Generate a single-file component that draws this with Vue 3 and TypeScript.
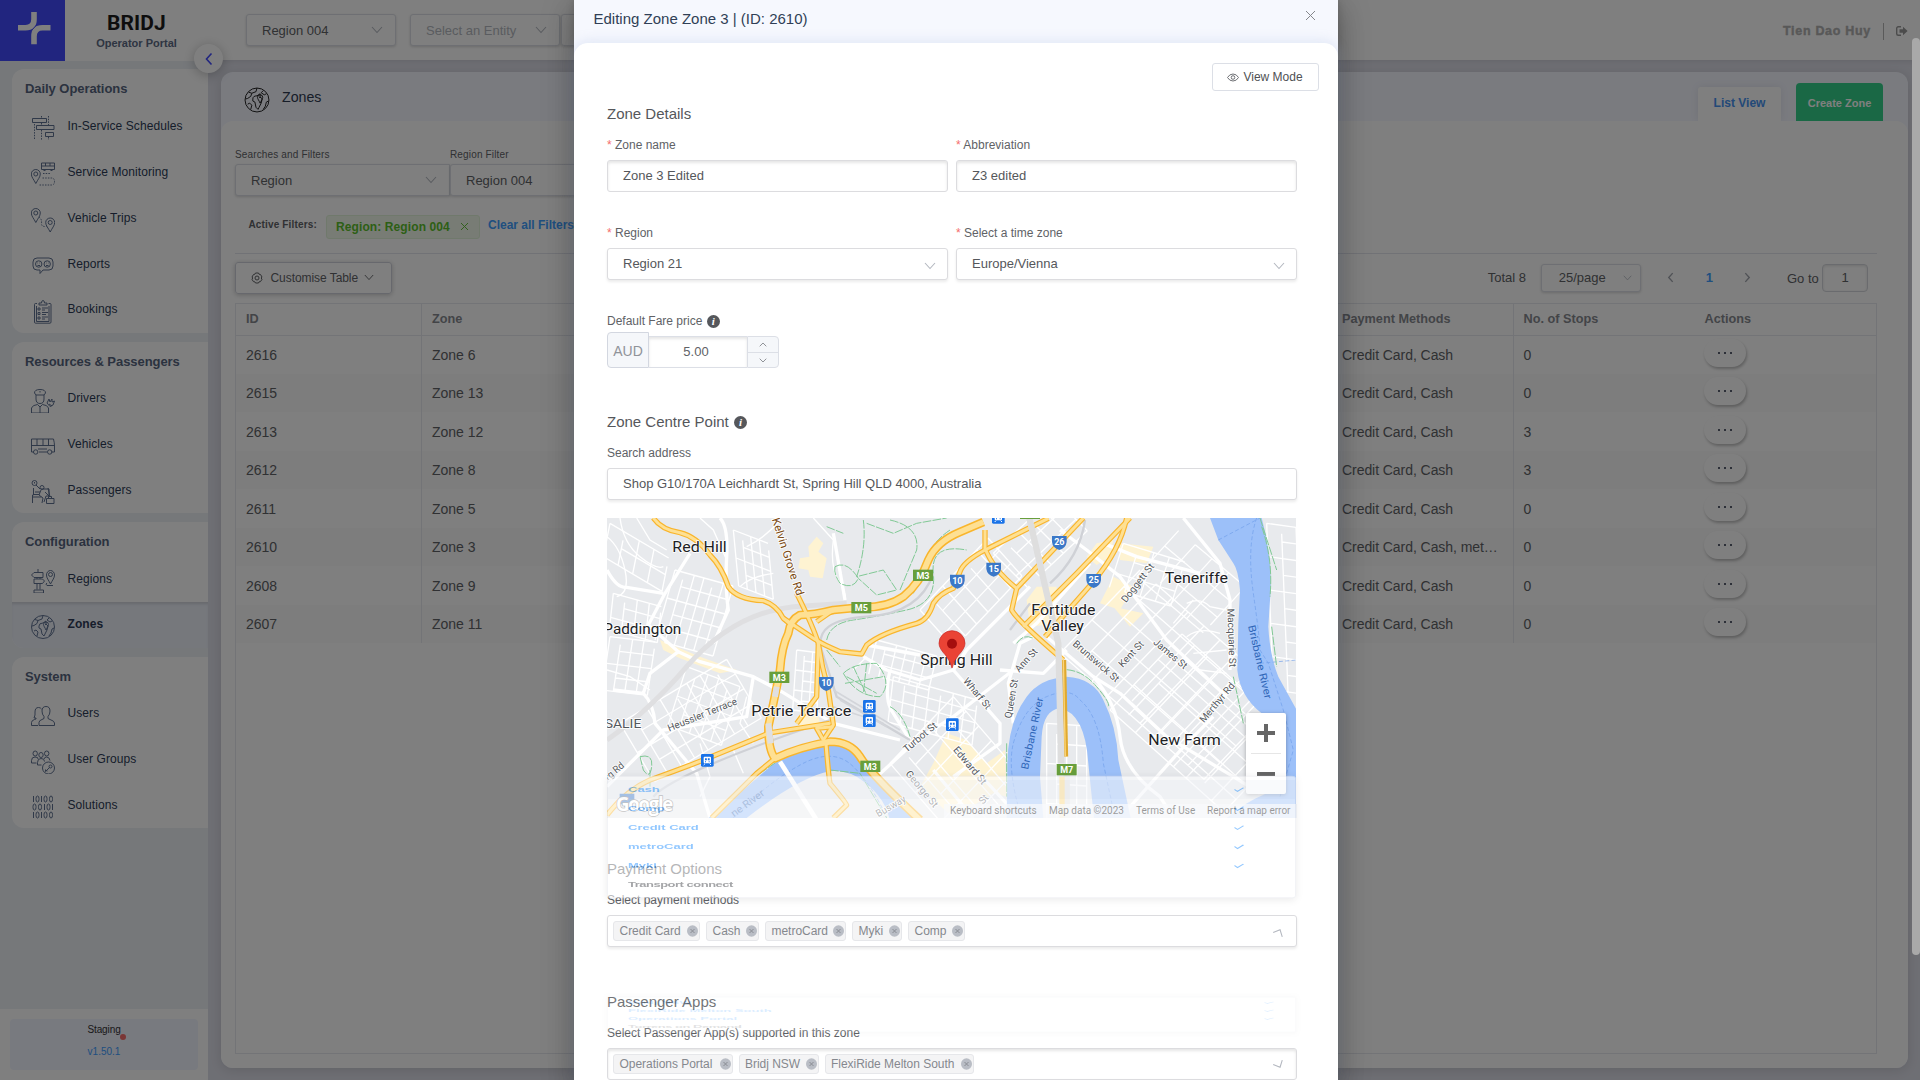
<script setup lang="ts">
interface NavItem { label: string; icon: string; active?: boolean }
interface NavGroup { title: string; items: NavItem[] }
interface Label { t: string; x: number; y: number; s: number; w: number; r?: number; c?: string; k?: number }

const groups: NavGroup[] = [
  { title: 'Daily Operations', items: [
    { label: 'In-Service Schedules', icon: 'schedule' },
    { label: 'Service Monitoring', icon: 'monitor' },
    { label: 'Vehicle Trips', icon: 'trips' },
    { label: 'Reports', icon: 'reports' },
    { label: 'Bookings', icon: 'bookings' },
  ] },
  { title: 'Resources & Passengers', items: [
    { label: 'Drivers', icon: 'drivers' },
    { label: 'Vehicles', icon: 'vehicles' },
    { label: 'Passengers', icon: 'passengers' },
  ] },
  { title: 'Configuration', items: [
    { label: 'Regions', icon: 'regions' },
    { label: 'Zones', icon: 'zones', active: true },
  ] },
  { title: 'System', items: [
    { label: 'Users', icon: 'users' },
    { label: 'User Groups', icon: 'groups' },
    { label: 'Solutions', icon: 'solutions' },
  ] },
]

const PIN = (x: number, y: number) =>
  `M${x} ${y + 14}C${x - 2} ${y + 10} ${x - 4.5} ${y + 7.5} ${x - 4.5} ${y + 4.5}A4.5 4.5 0 0 1 ${x + 4.5} ${y + 4.5}C${x + 4.5} ${y + 7.5} ${x + 2} ${y + 10} ${x} ${y + 14}ZM${x - 2} ${y + 4.5}a2 2 0 1 0 4 0a2 2 0 1 0-4 0`

const icons: Record<string, string[]> = {
  schedule: ['M1.5 2.5h14v4h-14zM5.500 9.500h17.500v4h-17.500zM14.500 16.500h8v4h-8z', '-M3.500 8v16M10.500 0v2M10.500 14v10M17.500 0v9M17.500 21v3M10.500 7v2'],
  monitor: [PIN(4.800, 7.500), 'M10.500 1h13v6.500h-13zM10.500 4h13M14.500 1v3M19 1v3M12.500 8.500h2M19.500 8.500h2', '-M12 11.500h7M11.500 16h9q3 0 3 3.500t-3 3.500h-13'],
  trips: [PIN(4.800, 0.500), PIN(19.200, 10), '-M8 9q3 2 2.500 6t5 3.500'],
  reports: ['M6 4h12a4 4 0 0 1 4 4v4a4 4 0 0 1-4 4h-6l-3 3.500v-3.500h-3a4 4 0 0 1-4-4v-4a4 4 0 0 1 4-4z', 'M4.500 10a3.200 3.200 0 1 0 6.400 0a3.200 3.200 0 1 0-6.400 0M13 10a3.200 3.200 0 1 0 6.400 0a3.200 3.200 0 1 0-6.400 0M6.500 11.500h2.500M15 11.500h2.500M6.500 9h.5M8.500 9h.5M15 9h.5M17 9h.5'],
  bookings: ['M6 3.500h-1.500q-1 0-1 1v17.500q0 1.200 1 1.200h14.500q1 0 1-1.200v-17.500q0-1-1-1h-1.500M5.500 6v15.500h12.500v-15.500M8 5v-2h2.500q0-2.500 1.500-2.500t1.500 2.500h2.500v2z', 'M7 8h2v2h-2zM7 12.500h2v2h-2zM7 17h2v2h-2zM11 8h6M11 10h3M11 12.500h6M11 14.500h4M11 17h6M11 19h3'],
  drivers: ['M3.500 4q0-3.500 5.500-3.500t5.500 3.500l-1.500 2h-8zM5 6v4q0 4.500 4 4.500t4-4.500v-4M9 2v1.500', 'M.5 24v-5q1-3 6-3.500l2.500 2.500 2.500-2.500q5 .5 6 3.500v5zM9 18v6', 'M16 14l2-4 1 3 2-3v3l2.500-1-1.500 4-3 1.500zM18 15l3 2'],
  vehicles: ['M.5 4h22q1 4 1 7v6h-3M3 17h-2.500v-13M.5 10.500h23M6 4v6.500M12 4v6.500M17.500 4v6.500M8 17h8M7 14h9M2.500 17a2.200 2.200 0 1 0 4.400 0a2.200 2.200 0 1 0-4.400 0M16.500 17a2.200 2.200 0 1 0 4.400 0a2.200 2.200 0 1 0-4.400 0'],
  passengers: ['M1 3a2.500 2.500 0 1 0 5 0a2.500 2.500 0 1 0-5 0M3.500 2v1.500M5 5l4 4M2.500 8v7h-1v8M1.500 17h9M9 7.500a2 2 0 1 0 4 0a2 2 0 1 0-4 0M10 9h8v7h-3l-2 6M10 10l-2 5 4 3-1 5M14 12l5 5M15.500 18.500h7.500v5h-7.500zM17.500 18v-1.500h3v1.500M4 12h5M3 14.500h5M17 8l2 9'],
  regions: ['M7 0v3M.500 6l2.500-2.500h9v5h-9zM3 10h8.500l2 2-2 2.500h-8.500zM6 8.500v1.500M9 8.500v1.500M6 14.500v6M9 14.500v6M3 21h9.500v3h-9.500z', 'M19.500 15c-2-4-4-6-4-9a4 4.500 0 0 1 8 0c0 3-2 5-4 9zM17.500 5.500a2 2 0 1 0 4 0a2 2 0 1 0-4 0M16 14q-2 1 0 2.500h6'],
  zones: ['M.5 12a11.500 11.500 0 1 0 23 0a11.500 11.500 0 1 0-23 0', 'M4 4.500l3 1-1 3-3 2-2 .5M7 5.500l4-1.500 1-3.500M3 16l2-1 2 2-1 4M18 3l-2 2 3 2 2-1M23 13l-2 1-1 4-2 3', 'M8 11q0-3 4-3l3-2v3l2 2-1 4-2 4-1 2-2-2-1-5-2-1z', 'M15 15c-1-2.500-2.500-4-2.500-5.500a2.500 2.500 0 0 1 5 0c0 1.500-1.500 3-2.500 5.500zM14 9.500h2'],
  users: ['M8 21.500v-3q0-2 3-3l2-1v-2q-2-2-2-5.500 0-4.500 4-4.500t4 4.500q0 3.500-2 5.500v2l2 1q4.500 1.500 4.500 3.500v2.500z', 'M7 21.500h-6.500v-3q0-2 3-3l1.500-.5v-1h-2q1.500-3 1-6 0-4.500 3.500-4.500 2 0 3 1.500'],
  groups: ['M2 3.500a2.200 2.500 0 1 0 4.400 0a2.200 2.500 0 1 0-4.400 0M13.500 3.500a2.200 2.500 0 1 0 4.400 0a2.200 2.500 0 1 0-4.400 0M7.800 5a2.200 2.500 0 1 0 4.400 0a2.200 2.500 0 1 0-4.400 0', 'M.5 13v-2.500q0-3.500 3.500-3.500t3 2M5.500 13h-5M6.500 15v-2.500q0-4 3.500-4t3.500 3M6.500 15h4M13 9q.5-2 2.500-2 3 0 3.500 3.500', 'M11.500 18a6 6 0 1 0 12 0a6 6 0 1 0-12 0M14.500 21.500l4-4M18 16.500a1.500 1.500 0 1 0 3 0a1.500 1.500 0 1 0-3 0M14.500 21.500v-2M16 21.500v-1'],
  solutions: ['M2.500 1v6M10.500 1v6M2.500 17v6M10.500 17v6M13.500 9v6M21.500 9v6', 'M5 3.500q0-2.500 1.500-2.500t1.500 2.500v1q0 2.500-1.500 2.500t-1.500-2.500zM13 3.500q0-2.500 1.500-2.500t1.500 2.500v1q0 2.500-1.500 2.500t-1.500-2.500zM18.500 3.500q0-2.500 1.500-2.500t1.500 2.500v1q0 2.500-1.500 2.500t-1.500-2.500z', 'M2 11.500q0-2.500 1.500-2.500t1.500 2.500v1q0 2.500-1.500 2.500t-1.500-2.500zM7.500 11.500q0-2.500 1.500-2.500t1.500 2.500v1q0 2.500-1.500 2.500t-1.500-2.500zM16 11.500q0-2.500 1.500-2.500t1.500 2.500v1q0 2.500-1.500 2.500t-1.500-2.500z', 'M5 19.500q0-2.500 1.500-2.500t1.500 2.500v1q0 2.500-1.500 2.500t-1.500-2.500zM13 19.500q0-2.500 1.500-2.500t1.500 2.500v1q0 2.500-1.500 2.500t-1.500-2.500zM18.500 19.500q0-2.500 1.500-2.500t1.500 2.500v1q0 2.500-1.500 2.500t-1.500-2.500z'],
}

const rows = [
  { id: 2616, zone: 'Zone 6', pay: 'Credit Card, Cash', stops: 0 },
  { id: 2615, zone: 'Zone 13', pay: 'Credit Card, Cash', stops: 0 },
  { id: 2613, zone: 'Zone 12', pay: 'Credit Card, Cash', stops: 3 },
  { id: 2612, zone: 'Zone 8', pay: 'Credit Card, Cash', stops: 3 },
  { id: 2611, zone: 'Zone 5', pay: 'Credit Card, Cash', stops: 0 },
  { id: 2610, zone: 'Zone 3', pay: 'Credit Card, Cash, met…', stops: 0 },
  { id: 2608, zone: 'Zone 9', pay: 'Credit Card, Cash', stops: 0 },
  { id: 2607, zone: 'Zone 11', pay: 'Credit Card, Cash', stops: 0 },
]

const payTags: [string, number][] = [['Credit Card', 87], ['Cash', 53], ['metroCard', 81], ['Myki', 50], ['Comp', 57]]
const appTags: [string, number][] = [['Operations Portal', 119.5], ['Bridj NSW', 80], ['FlexiRide Melton South', 149]]
const payOptions = ['Cash', 'Comp', 'Credit Card', 'metroCard', 'Myki', 'Transport connect']
const appOptions = ['Bridj NSW', 'FlexiRide Melton South', 'Operations Portal', 'Torrens on Demand']

/* Minor street lattice: nu+1 lines along v and nv+1 lines along u */
function lattice(x: number, y: number, u: [number, number], v: [number, number], nu: number, nv: number): string {
  let d = ''
  for (let i = 0; i <= nu; i++) {
    const a = i % 3 === 1 ? 0.5 : 0
    d += `M${x + u[0] * i + v[0] * a} ${y + u[1] * i + v[1] * a}l${v[0] * (nv - a)} ${v[1] * (nv - a)}`
  }
  for (let j = 0; j <= nv; j++) {
    const a = j % 2
    d += `M${x + v[0] * j + u[0] * a} ${y + v[1] * j + u[1] * a}l${u[0] * (nu - a)} ${u[1] * (nu - a)}`
  }
  return d
}

const minor = [
  lattice(225, 180, [29, 8], [-12, 42], 6, 5),
  lattice(30, 380, [34, 4], [-6, 40], 4, 4),
  lattice(260, 470, [32, 12], [-14, 44], 5, 4),
  lattice(60, 640, [40, -24], [26, 44], 8, 4),
  lattice(400, 60, [26, 10], [4, 42], 4, 4),
  lattice(590, 420, [24, 3], [-2, 30], 3, 6),
  lattice(30, 40, [44, 26], [-10, 50], 4, 2),
  lattice(40, 250, [36, 10], [-4, 36], 4, 3),
  lattice(830, 390, [30, 8], [-8, 34], 6, 3),
  lattice(960, 300, [34, -36], [34, 38], 6, 3),
  lattice(880, 500, [36, 10], [-4, 34], 7, 4),
  lattice(870, 760, [38, -40], [38, 44], 5, 6),
  lattice(1180, 130, [36, -34], [34, 34], 5, 3),
  lattice(1380, 430, [48, 42], [48, -50], 9, 5),
  lattice(1530, 600, [38, 34], [36, -38], 9, 6),
  lattice(1570, 100, [46, 14], [-14, 44], 4, 3),
  lattice(1610, 200, [50, 42], [42, -46], 4, 3),
  lattice(2000, 40, [44, 6], [2, 50], 3, 10),
  lattice(1340, 640, [30, 2], [0, 60], 4, 5),
  'M60 24Q70 100 120 140T190 170M110 24L150 90 200 120M21 80Q60 110 75 180T50 260M300 24L340 60 380 150M420 230Q450 200 520 190M700 90Q690 170 715 210T735 270M640 24L700 90M540 30Q500 80 440 110M21 480L90 500 150 540M300 700L330 800 300 860M400 720L430 790M440 560L420 640 460 700M760 480L800 440M1760 280Q1800 260 1830 290L1880 300M1760 380Q1800 350 1860 370M1780 430L1880 420M1800 480L1880 490M1720 340L1780 270',
]
const major = [
  'M270 130L195 250 145 345 235 425 150 490 130 550 40 540',
  'M21 180Q50 235 80 232L190 250',
  'M360 24Q385 50 380 140T385 300L340 400',
  'M235 425L300 455 460 500 545 545 700 640 900 690',
  'M130 550Q160 580 165 640L290 790 330 924',
  'M460 500L440 620 190 660 60 790 21 830',
  'M790 440L860 480 960 510 1060 480 1100 420 1290 230',
  'M800 405L960 435',
  'M870 480Q850 570 880 610L930 690',
  'M700 70L735 270',
  'M1060 480L1200 640 1200 700 1060 800',
  'M1000 780L1120 924M1090 740L1260 924',
  'M820 810L950 690 1060 620 1240 480',
  'M1240 640L1225 520 1260 400 1300 380',
  'M1200 480L1330 490 1400 420',
  'M1340 380L1480 500 1560 550 1700 680 1900 800 1980 850',
  'M1380 60L1460 120 1560 200 1700 390 1880 560',
  'M1750 24L1860 160 1890 270 1890 480',
  'M1840 620L1760 700 1560 924',
  'M1510 100L1610 140 1800 190',
  'M1480 500Q1550 580 1560 680T1680 860L1720 924',
  'M1240 400L1310 340 1470 160',
]

const yellow = [
  'M160 24Q185 60 240 68Q290 80 330 135Q365 170 385 230Q410 268 490 272Q530 285 550 325L640 385Q670 405 720 425L785 432L800 405Q840 370 950 340Q985 330 1000 280Q1020 250 1060 235L1080 185Q1090 155 1155 120L1345 25',
  'M590 250Q640 350 655 400Q665 470 685 540L700 645 670 690',
  'M655 400L650 560 590 640',
  'M550 325L580 350M700 300L650 335',
  'M500 670L690 640M700 650L650 655 670 690',
  'M21 915Q80 840 150 810Q260 770 310 750L500 672',
  'M525 745L470 790 335 924',
  'M678 700Q685 790 690 820Q740 880 740 885L700 924',
  'M1155 60L1155 115Q1180 180 1250 235L1235 300Q1250 330 1390 450',
  'M1250 235L1450 24',
  'M1270 350L1430 190 1590 24',
  'M1335 380L1480 215Q1560 120 1580 24',
]
const motorways = [
  'M1150 36L1080 66Q1010 95 985 150Q960 220 910 260Q860 295 780 292L700 300Q640 315 600 315Q570 330 565 370Q545 410 540 480Q525 560 505 650Q505 720 525 745Q600 710 690 695Q750 695 780 740Q810 790 960 930',
]

const water = [
  'M325 924L430 840 520 762Q610 715 690 706Q760 700 790 765L880 850 945 924H868Q850 850 770 800Q730 780 690 784Q600 800 440 924Z',
  'M1220 924L1222 780Q1220 640 1280 560Q1320 505 1400 500Q1480 505 1510 570Q1550 650 1555 750L1592 924H1482Q1475 860 1465 760Q1455 610 1380 595Q1330 600 1325 680L1320 800 1330 924Z',
  'M1830 24H1985Q2015 130 2012 240L2005 350Q2010 440 2035 500L2090 600V924H1880Q1930 880 2000 850Q2050 800 2030 730L1985 610Q1920 560 1912 480L1915 340 1920 240Q1915 180 1900 160L1855 90Z',
]
const ferry = 'M400 924Q500 820 600 765T760 770 860 924M1265 924Q1220 780 1240 700 1270 590 1340 560T1440 570Q1500 620 1510 760L1545 924M1970 24Q1940 110 1960 250T1980 420L2005 460 2050 600 2080 720 2040 860M1855 90L1980 24M1980 460L2090 450'
const parks = 'M790 30Q800 110 770 200L850 180 890 240 830 255 775 205M870 30Q960 50 950 120L900 240M800 40L880 70 950 40 1040 24M705 170Q740 150 775 205Q760 240 720 220Q700 190 705 170M1050 60Q990 100 970 170L940 250M680 390Q690 340 760 330T920 300 1000 190 1100 120M680 420L720 470M730 490Q760 460 830 460 880 520 840 560 770 560 730 490M740 500L830 550M760 470L800 555M800 460L790 550M735 520L850 500M870 590Q910 610 930 680M120 740Q160 730 155 770T130 780ZM150 780L150 830M1370 480Q1440 470 1490 530T1520 590M1985 50Q2020 150 2010 260M1980 24L2030 180M2015 350L2030 470M680 50L730 70M480 790L560 735M690 780L780 790 860 924M1930 640L1900 500M1250 400Q1270 370 1300 385M1220 700L1220 860'
const cream = 'M625 110L650 80 670 100 655 125 680 145 668 205 630 200 625 180 595 175 600 145 628 140ZM180 390L300 440 410 480 360 490 240 445 190 420ZM1490 100L1540 90 1530 140 1490 165 1460 140ZM1560 100L1660 110 1640 160 1560 150ZM1540 200L1600 230 1560 300 1500 280ZM1310 230L1370 230 1370 340 1290 350 1280 270ZM1540 290L1630 310 1590 350ZM1040 670L1100 690 1160 760 1215 720 1220 860 1180 850 1060 924 960 830 1000 760ZM590 620L650 600 660 640 600 655ZM1420 410L1460 420 1470 450Z'

const labels: Label[] = [
  { t: 'Red Hill', x: 217, y: 127, s: 46.5, w: 163 },
  { t: 'Paddington', x: 10, y: 371, s: 46.5, w: 234 },
  { t: 'Petrie Terrace', x: 454, y: 619, s: 46.5, w: 300 },
  { t: 'Spring Hill', x: 961, y: 466, s: 46.5, w: 217 },
  { t: 'Fortitude', x: 1294, y: 314, s: 46.5, w: 192 },
  { t: 'Valley', x: 1324, y: 362, s: 46.5, w: 128 },
  { t: 'Teneriffe', x: 1694, y: 218, s: 46.5, w: 190 },
  { t: 'New Farm', x: 1645, y: 704, s: 46.5, w: 217 },
  { t: 'SALIE', x: 14, y: 653, s: 39, w: 110, c: '#54585d' },
  { t: 'Kelvin Grove Rd', x: 515, y: 28, s: 34, w: 243, r: 72, c: '#7b4a12' },
  { t: 'Heussler Terrace', x: 208, y: 665, s: 30, w: 222, r: -22, c: '#54585d' },
  { t: 'rg Rd', x: 24, y: 812, s: 30, w: 66, r: -40, c: '#54585d' },
  { t: 'Turbot St', x: 920, y: 728, s: 30, w: 122, r: -40, c: '#54585d' },
  { t: 'George St', x: 915, y: 792, s: 30, w: 134, r: 50, c: '#54585d' },
  { t: 'Edward St', x: 1058, y: 720, s: 30, w: 138, r: 50, c: '#54585d' },
  { t: 'Busway', x: 835, y: 922, s: 30, w: 98, r: -30, c: '#54585d' },
  { t: 'ne River', x: 402, y: 922, s: 31, w: 116, r: -36, c: '#3f6fb5' },
  { t: 'Wharf St', x: 1088, y: 514, s: 30, w: 112, r: 50, c: '#54585d' },
  { t: 'Queen St', x: 1234, y: 626, s: 30, w: 118, r: -80, c: '#54585d' },
  { t: 'Ann St', x: 1258, y: 488, s: 30, w: 84, r: -48, c: '#54585d' },
  { t: 'Doggett St', x: 1578, y: 280, s: 30, w: 140, r: -52, c: '#54585d' },
  { t: 'Brunswick St', x: 1416, y: 404, s: 30, w: 174, r: 41, c: '#54585d' },
  { t: 'Kent St', x: 1568, y: 474, s: 30, w: 96, r: -47, c: '#54585d' },
  { t: 'James St', x: 1658, y: 400, s: 30, w: 122, r: 40, c: '#54585d' },
  { t: 'Macquarie St', x: 1882, y: 296, s: 30, w: 176, r: 88, c: '#54585d' },
  { t: 'Merthyr Rd', x: 1812, y: 640, s: 30, w: 146, r: -50, c: '#54585d' },
  { t: 'Brisbane River', x: 1284, y: 780, s: 31, w: 220, r: -78, c: '#2f66b8' },
  { t: 'Brisbane River', x: 1944, y: 348, s: 31, w: 226, r: 77, c: '#2f66b8' },
  { t: 'St', x: 1150, y: 884, s: 30, w: 26, r: -50, c: '#54585d' },
]
const motorBadges: [string, number, number][] = [['M3', 969, 196], ['M5', 784, 293], ['M3', 538, 502], ['M3', 811, 769], ['M7', 1400, 779], ['', 1290, 10]]
const shields: [string, number, number][] = [['10', 1072, 213], ['10', 679, 520], ['15', 1181, 177], ['26', 1378, 97], ['25', 1481, 211], ['', 81, 870]]
const stations: [number, number][] = [[808, 589], [808, 632], [1057, 644], [322, 751], [1195, 22]]
</script>

<template>
  <div class="app">
    <aside class="sidebar">
      <div class="brand">
        <div class="logo">
          <svg width="65" height="61" viewBox="0 0 65 61" fill="none" stroke="#fff" stroke-width="5.600">
            <path d="M18 27.700h7.500q8.500 0 8.500-8.500v-7.200" /><path d="M50.500 27.700h-8q-8.500 0-8.500 8.500v8" />
            <path d="M30.500 31.500l7.500-8" stroke="#424aff" stroke-width="1" />
          </svg>
        </div>
        <div class="brand-text"><b>BRIDJ</b><span>Operator Portal</span></div>
      </div>
      <nav>
        <section v-for="g in groups" :key="g.title" class="group">
          <h4>{{ g.title }}</h4>
          <div v-for="it in g.items" :key="it.label" class="item" :class="{ active: it.active }">
            <svg width="24" height="24" viewBox="0 0 24 24" class="ico">
              <path v-for="(p, i) in icons[it.icon]" :key="i" :d="p.replace('-M', 'M')" :stroke-dasharray="p.startsWith('-') ? '1.500 1.200' : undefined" />
            </svg>
            <span>{{ it.label }}</span>
          </div>
        </section>
      </nav>
      <footer><div class="env"><span>Staging<i /></span><a>v1.50.1</a></div></footer>
      <div class="collapse"><svg width="10" height="14" viewBox="0 0 10 14"><path d="M7.500 1.500L2.500 7l5 5.500" fill="none" stroke="#424aff" stroke-width="1.600" /></svg></div>
    </aside>

    <div class="main">
      <header class="topbar">
        <div class="sel" style="width: 150px">Region 004<svg class="chev" viewBox="0 0 12 8"><path d="M1 1l5 5.500L11 1" /></svg></div>
        <div class="sel ph entity">Select an Entity<svg class="chev" viewBox="0 0 12 8"><path d="M1 1l5 5.500L11 1" /></svg></div>
        <div class="sel third" />
        <div class="user"><b>Tien Dao Huy</b><i />
          <svg width="12" height="10" viewBox="0 0 12 10"><path d="M5 .7H2.200A1.500 1.500 0 0 0 .7 2.200v5.600a1.500 1.500 0 0 0 1.500 1.500H5" fill="none" stroke="#999" stroke-width="1.400" /><path d="M3.500 3.300H7V.8L11.600 5 7 9.200V6.700H3.500z" fill="#999" /></svg>
        </div>
      </header>
      <div class="card">
        <div class="card-head">
          <svg width="26" height="26" viewBox="-.5 -.5 25 25" class="ico dark"><path v-for="(p, i) in icons.zones" :key="i" :d="p" /></svg>
          <h2>Zones</h2>
          <div class="tab">List View</div>
          <div class="create">Create Zone</div>
        </div>
        <div class="card-body">
          <div class="flabels"><span>Searches and Filters</span><span>Region Filter</span></div>
          <div class="fields">
            <div class="sel f1">Region<svg class="chev" viewBox="0 0 12 8"><path d="M1 1l5 5.500L11 1" /></svg></div>
            <div class="sel f2">Region 004</div>
          </div>
          <div class="active-filters">
            <b class="af">Active Filters:</b>
            <span class="ftag">Region: Region 004<svg width="9" height="9" viewBox="0 0 9 9"><path d="M1 1l7 7M8 1L1 8" stroke="#67c23a" fill="none" /></svg></span>
            <a>Clear all Filters</a>
          </div>
          <div class="controls">
            <div class="custom">
              <svg width="12" height="12" viewBox="0 0 12 12" fill="none" stroke="#606266"><path d="M4.500 1h3l.6 1.300 1.400.2 1.500 2.500-.8 1 .8 1.300-1.500 2.300-1.400.2-.6 1.200h-3l-.7-1.200-1.400-.2L1 7.300 1.700 6 1 5l1.500-2.500 1.300-.2z" /><circle cx="6" cy="6" r="2" /></svg>
              Customise Table
              <svg class="chev s" viewBox="0 0 12 8"><path d="M1 1l5 5.500L11 1" /></svg>
            </div>
            <div class="pager">
              <span class="total">Total 8</span>
              <div class="sel psize">25/page<svg class="chev" viewBox="0 0 12 8"><path d="M1 1l5 5.500L11 1" /></svg></div>
              <svg class="arr a1" viewBox="0 0 8 12"><path d="M6.500 1L2 6l4.500 5" /></svg>
              <b>1</b>
              <svg class="arr a2" viewBox="0 0 8 12"><path d="M1.500 1L6 6l-4.500 5" /></svg>
              <span class="goto">Go to</span>
              <div class="gobox">1</div>
            </div>
          </div>
          <div class="table">
            <div class="tr th"><div class="td">ID</div><div class="td">Zone</div><div class="td">Payment Methods</div><div class="td nb">No. of Stops</div><div class="td nb">Actions</div></div>
            <div v-for="(r, i) in rows" :key="r.id" class="tr" :class="{ odd: i % 2 === 1 }">
              <div class="td">{{ r.id }}</div><div class="td">{{ r.zone }}</div><div class="td"><span class="ell">{{ r.pay }}</span></div><div class="td nb">{{ r.stops }}</div>
              <div class="td nb"><span class="more"><i /><i /><i /></span></div>
            </div>
          </div>
        </div>
      </div>
    </div>

    <div class="overlay" />
    <div class="scroll" />

    <div class="modal">
      <div class="mhead"><span>Editing Zone Zone 3 | (ID: 2610)</span>
        <svg width="11" height="11" viewBox="0 0 11 11"><path d="M1 1l9 9M10 1l-9 9" stroke="#85878c" fill="none" /></svg></div>
      <div class="mbody">
        <div class="vrow"><button class="vm"><svg width="12" height="9" viewBox="0 0 12 9" fill="none" stroke="#606266" stroke-width=".9"><path d="M.5 4.500Q2.500 1 6 1t5.500 3.500Q9.500 8 6 8T.5 4.500z" /><circle cx="6" cy="4.500" r="1.800" /></svg>View Mode</button></div>
        <h3 class="h-first">Zone Details</h3>
        <div class="two">
          <div><label><em>*</em> Zone name</label><div class="in inset">Zone 3 Edited</div></div>
          <div><label><em>*</em> Abbreviation</label><div class="in inset">Z3 edited</div></div>
        </div>
        <div class="two second">
          <div><label><em>*</em> Region</label><div class="in">Region 21<svg class="chev" viewBox="0 0 12 8"><path d="M1 1l5 5.500L11 1" /></svg></div></div>
          <div><label><em>*</em> Select a time zone</label><div class="in">Europe/Vienna<svg class="chev" viewBox="0 0 12 8"><path d="M1 1l5 5.500L11 1" /></svg></div></div>
        </div>
        <label class="fare">Default Fare price <span class="info">i</span></label>
        <div class="num">
          <div class="cur">AUD</div>
          <div class="val">5.00</div>
          <div class="steps">
            <div><svg width="8" height="5" viewBox="0 0 8 5"><path d="M.7 4.300L4 1l3.300 3.300" /></svg></div>
            <div><svg width="8" height="5" viewBox="0 0 8 5"><path d="M.7.7L4 4 7.300.7" /></svg></div>
          </div>
        </div>
        <h3 class="h-centre">Zone Centre Point <span class="info up">i</span></h3>
        <label class="lb">Search address</label>
        <div class="in">Shop G10/170A Leichhardt St, Spring Hill QLD 4000, Australia</div>

        <div class="map">
          <svg width="689" height="300" viewBox="21 24 2067 900" preserveAspectRatio="none">
            <rect x="21" y="24" width="2067" height="900" fill="#e8eaed" />
            <path :d="cream" fill="#fef3d2" />
            <g fill="none" stroke="#fff" stroke-width="4"><path v-for="(d, i) in minor" :key="i" :d="d" /></g>
            <g fill="none" stroke="#fff" stroke-width="10" stroke-linejoin="round"><path v-for="(d, i) in major" :key="i" :d="d" /></g>
            <path v-for="(d, i) in water" :key="i" :d="d" fill="#9cc0f9" />
            <path :d="ferry" fill="none" stroke="#6f9fea" stroke-width="2" stroke-dasharray="12 7" />
            <path :d="parks" fill="none" stroke="#81c995" stroke-width="3" stroke-dasharray="26 4" />
            <path d="M21 690Q150 600 260 470Q400 310 580 290L740 280" fill="none" stroke="#dfdfe1" stroke-width="15" />
            <path d="M1000 190Q960 310 800 320T665 420L710 560 930 690M160 860Q220 790 690 630M1455 30Q1440 140 1350 220M1290 280L1230 360" fill="none" stroke="#cfd1d6" stroke-width="7" />
            <path d="M700 540L900 660M720 570L860 650M700 590L850 640" fill="none" stroke="#d3d5da" stroke-width="5" />
            <path d="M540 755L650 930" fill="none" stroke="#fff" stroke-width="14" />
            <g fill="none" stroke="#f9b52c" stroke-linejoin="round"><path v-for="(d, i) in yellow" :key="i" :d="d" stroke-width="16" /><path v-for="(d, i) in motorways" :key="i" :d="d" stroke-width="26" /></g>
            <g fill="none" stroke="#fee093" stroke-linejoin="round"><path v-for="(d, i) in yellow" :key="i" :d="d" stroke-width="9" /><path v-for="(d, i) in motorways" :key="i" :d="d" stroke-width="17" /></g>
            <path d="M505 640L512 700M525 560L530 530" fill="none" stroke="#dfdfe1" stroke-width="18" />
            <path d="M1392 450L1398 740" fill="none" stroke="#e0a92f" stroke-width="13" /><path d="M1390 450L1396 740" fill="none" stroke="#fbd57c" stroke-width="4" />
            <path d="M1288 24L1375 400 1384 760M1400 790V924" fill="none" stroke="#dedede" stroke-width="19" />
            <path d="M1386 800V924" stroke="#fbd57c" stroke-width="16" />
            <g v-for="([t, x, y], i) in motorBadges" :key="'m' + i">
              <rect :x="x - 30" :y="y - 17" width="60" height="34" fill="#689f3c" />
              <text :x="x" :y="y + 10" class="bd" text-anchor="middle">{{ t }}</text>
            </g>
            <g v-for="([t, x, y], i) in shields" :key="'s' + i">
              <path :d="`M${x - 22} ${y - 19}h44v18q-2 18-22 24q-20-6-22-24z`" fill="#3b78c8" />
              <text :x="x" :y="y + 9" class="bd" text-anchor="middle">{{ t }}</text>
            </g>
            <g v-for="([x, y], i) in stations" :key="'t' + i" :transform="`translate(${x} ${y})`">
              <rect x="-19" y="-19" width="38" height="38" rx="4" fill="#1a73e8" />
              <path d="M-8-11H8q3 0 3 3V6q0 3-3 3H-8q-3 0-3-3V-8q0-3 3-3z" fill="#fff" /><path d="M-7-6h5.500v6H-7zM1.500-6H7v6H1.500zM-7 3h3v3h-3zM4 3h3v3H4z" fill="#1a73e8" /><path d="M-7 10l-4 4M7 10l4 4" stroke="#fff" stroke-width="3" />
            </g>
            <text v-for="(l, i) in labels" :key="'l' + i" :transform="`translate(${l.x} ${l.y}) rotate(${l.r || 0})`" :font-size="l.s" :textLength="l.w" lengthAdjust="spacingAndGlyphs" :fill="l.c || '#202124'" :stroke="l.t.includes('River') ? 'none' : '#fff'" class="lbl">{{ l.t }}</text>
            <path d="M1056 474Q1052 455 1037 436Q1017 415 1017 400A39 38 0 0 1 1095 400Q1095 415 1075 436Q1060 455 1056 474Z" fill="#ea4335" stroke="#c5221f" stroke-width="2" /><circle cx="1056" cy="401" r="15" fill="#a50e0e" />
            <text x="48" y="902" class="goog" textLength="172">Google</text>
          </svg>
          <div class="attr"><span style="width: 99px">Keyboard shortcuts</span><span style="width: 87px">Map data ©2023</span><span style="width: 71px">Terms of Use</span><span>Report a map error</span></div>
          <div class="zoom"><i class="plus" /><hr><i class="minus" /></div>
        </div>

        <h3 class="h-pay">Payment Options</h3>
        <label class="lb">Select payment methods</label>
        <div class="in tags">
          <span v-for="[t, w] in payTags" :key="t" class="tag" :style="{ width: w + 'px' }">{{ t }}<svg width="11" height="12" viewBox="0 0 11 12"><ellipse cx="5.500" cy="6" rx="5.500" ry="5.800" fill="#b9bdc5" /><path d="M3.500 4l4 4M7.500 4l-4 4" stroke="#8a8d94" /></svg></span>
          <svg class="chev spin1" viewBox="0 0 12 8"><path d="M1 1l5 5.500L11 1" /></svg>
        </div>
        <h3 class="h-apps">Passenger Apps</h3>
        <label class="lb">Select Passenger App(s) supported in this zone</label>
        <div class="in inset tags">
          <span v-for="[t, w] in appTags" :key="t" class="tag" :style="{ width: w + 'px' }">{{ t }}<svg width="11" height="12" viewBox="0 0 11 12"><ellipse cx="5.500" cy="6" rx="5.500" ry="5.800" fill="#b9bdc5" /><path d="M3.500 4l4 4M7.500 4l-4 4" stroke="#8a8d94" /></svg></span>
          <svg class="chev spin2" viewBox="0 0 12 8"><path d="M1 1l5 5.500L11 1" /></svg>
        </div>
      </div>
      <div class="pop p1">
        <div v-for="(o, i) in payOptions" :key="o" class="opt" :class="{ on: i < 5, hov: i === 0 }">{{ o }}<svg v-if="i < 5" width="12" height="12" viewBox="0 0 12 12"><path d="M1.500 6l3 3.500 6-6.500" /></svg></div>
      </div>
      <div class="pop p2">
        <div v-for="(o, i) in appOptions" :key="o" class="opt" :class="{ on: i < 3 }">{{ o }}<svg v-if="i < 3" width="12" height="12" viewBox="0 0 12 12"><path d="M1.500 6l3 3.500 6-6.500" /></svg></div>
      </div>
    </div>
  </div>
</template>

<style>
html, body { margin: 0; overflow: hidden; }
</style>

<style scoped>
* { box-sizing: border-box; }
.app { position: relative; width: 1920px; height: 1080px; display: flex; overflow: hidden; font: 13px "Liberation Sans", Arial, sans-serif; color: #606266; background: #dddee8; }
h2, h3, h4 { margin: 0; font-weight: 400; }
i { font-style: normal; }

.sidebar { position: relative; z-index: 2; width: 208px; flex: none; height: 1080px; display: flex; flex-direction: column; background: #ecf0f5; }
.brand { height: 61px; display: flex; background: #fff; flex: none; }
.logo { width: 65px; background: #424aff; }
.brand-text { flex: 1; display: flex; flex-direction: column; align-items: center; padding-top: 11px; }
.brand-text b { font: 700 21px/25px Roboto, sans-serif; letter-spacing: .1px; color: #1c1c1c; }
.brand-text span { font: 700 11px/14px "Liberation Sans", Arial, sans-serif; color: #5c6a84; }
nav { flex: 1; padding: 8px 0 0 12px; display: flex; flex-direction: column; gap: 9px; }
.group { background: #fff; border-radius: 12px 0 0 12px; overflow: hidden; flex: none; }
.group h4 { height: 34px; padding: 11px 0 0 13px; font: 700 13px/18px "Liberation Sans", Arial, sans-serif; letter-spacing: -.06px; color: #56657f; }
.item { height: 46px; display: flex; align-items: center; padding-left: 19px; font-size: 12px; letter-spacing: .08px; color: #2c3b56; }
.item:last-child { height: 45.500px; }
.item .ico { margin: 4px 12.500px 0 0; }
.item span { margin-top: -1px; }
.item.active { background: #ecf0f9; font-weight: 700; box-shadow: inset 0 3px 3px -1px rgba(0,0,0,.12); }
.ico { fill: none; stroke: #596b8c; stroke-width: .95; flex: none; }
.ico.dark { stroke: #222; }
footer { height: 71px; background: #fff; padding: 10px; }
.env { height: 51px; border-radius: 4px; background: #f1f4ff; display: flex; flex-direction: column; align-items: center; font-size: 10px; color: #333; padding-top: 4px; }
.env span { position: relative; line-height: 14px; letter-spacing: -.1px; }
.env a { margin-top: 8px; line-height: 14px; color: #409eff; }
.env i { position: absolute; right: -5px; bottom: -3px; width: 6px; height: 6px; border-radius: 50%; background: #f56c6c; }
.collapse { position: absolute; left: 194px; top: 44px; width: 29px; height: 29px; border-radius: 50%; background: #fff; box-shadow: 0 2px 12px rgba(0,0,0,.25); display: flex; align-items: center; justify-content: center; }

.main { flex: 1; height: 1080px; display: flex; flex-direction: column; }
.topbar { height: 60px; background: #fff; display: flex; align-items: flex-start; padding: 14px 12px 0 38px; box-shadow: 0 1px 6px rgba(0,0,0,.1); flex: none; }
.sel { height: 32px; border: 1px solid #dcdfe6; border-radius: 3px; box-shadow: 0 1px 3px rgba(0,0,0,.16); background: #fff; padding: 0 12px 0 15px; display: flex; align-items: center; justify-content: space-between; font-size: 13px; color: #606266; }
.sel.ph { color: #b4b8c0; }
.entity { width: 150px; margin-left: 14px; }
.third { width: 150px; margin-left: 1px; }
.chev { width: 12px; height: 8px; fill: none; stroke: #b4b8c0; stroke-width: 1.100; flex: none; }
.user { margin: 7px 0 0 auto; display: flex; align-items: center; height: 20px; }
.user b { font-weight: 700; font-size: 12.500px; letter-spacing: .7px; color: #b0b0b0; -webkit-text-stroke: .4px #b0b0b0; }
.user i { width: 1px; height: 17px; background: #b5b5b5; margin: 0 12px 0 12px; }
.card { margin: 12px 12px 12px 13px; height: 996px; border-radius: 12px; background: #f4f6ff; box-shadow: 0 2px 12px rgba(0,0,0,.12); display: flex; flex-direction: column; }
.card-head { height: 49px; display: flex; padding-left: 23px; }
.card-head .ico { margin-top: 15px; }
.card-head h2 { margin: 16px auto 0 12px; font-size: 14.200px; line-height: 18px; color: #2e3a50; }
.tab { margin-top: 15px; height: 34px; width: 83px; background: #fff; border-radius: 3px 3px 0 0; font: 700 12px/33px "Liberation Sans", Arial, sans-serif; text-align: center; box-shadow: 0 0 8px rgba(0,0,0,.08); color: #4692f0; }
.create { margin: 11px 25px 0 15px; height: 38px; width: 87px; background: #34d08a; border-radius: 4px 4px 0 0; color: #fff; font: 700 11px/41px "Liberation Sans", Arial, sans-serif; text-align: center; }
.card-body { position: relative; flex: 1; background: #fff; border-radius: 12px; padding: 27px 31px 14.500px 14px; display: flex; flex-direction: column; }
.flabels { display: flex; height: 14px; font-size: 10px; line-height: 14px; letter-spacing: .15px; }
.flabels span:first-child { width: 215px; }
.fields { margin-top: 2px; display: flex; }
.f1 { width: 215px; border-radius: 3px 0 0 3px; }
.f2 { width: 217px; }
.active-filters { margin-top: 19px; height: 38.500px; display: flex; border-bottom: 1px solid #e3e5ec; }
.af { width: 87px; padding-left: 13.500px; margin-right: 4px; font-size: 10px; line-height: 20px; letter-spacing: .15px; white-space: nowrap; font-weight: 600; }
.ftag { width: 154px; height: 24px; border: 1px solid #e1f3d8; background: #f0f9eb; border-radius: 3px; color: #5bbf2c; font: 700 12px/22px "Liberation Sans", Arial, sans-serif; padding-left: 9px; letter-spacing: .1px; white-space: nowrap; }
.ftag svg { margin-left: 10px; }
.active-filters a { margin-left: 8px; font: 700 12px/20px "Liberation Sans", Arial, sans-serif; color: #409eff; }
.controls { margin-top: 8px; height: 32px; display: flex; justify-content: space-between; }
.custom { width: 157px; height: 32px; border: 1px solid #cfd1da; border-radius: 3px; box-shadow: 0 1px 5px rgba(0,0,0,.22); display: flex; align-items: center; font-size: 12px; padding-left: 14.500px; gap: 8px; letter-spacing: -.06px; }
.custom .chev { width: 10px; height: 7px; stroke: #606266; margin-left: -2px; }
.pager { display: flex; align-items: center; }
.total { width: 53px; }
.psize { width: 100px; height: 28px; padding: 0 8px 0 17px; }
.psize .chev { width: 9px; height: 6px; }
.arr { width: 7px; height: 11px; fill: none; stroke: #a0a4ad; stroke-width: 1.600; }
.a1 { margin: 0 32px 0 26px; }
.pager b { color: #409eff; }
.a2 { margin: 0 36px 0 31px; }
.goto { width: 34px; padding-top: 2px; margin-left: 0; }
.gobox { width: 46px; height: 28px; border: 1px solid #d4d6dc; border-radius: 4px; display: flex; align-items: center; justify-content: center; margin-left: 1px; margin-right: 9px; box-shadow: inset 0 1px 3px rgba(0,0,0,.12); }
.table { margin-top: 9px; flex: 1; border: 1px solid #e6e8ee; font-size: 14px; }
.tr { display: grid; grid-template-columns: 186px 910px 181.500px 181px 1fr; height: 38.480px; align-items: center; }
.tr.th { height: 32px; font: 700 12.700px "Liberation Sans", Arial, sans-serif; color: #86898f; border-bottom: 1px solid #e6e8ee; }
.tr.odd { background: #fafafa; }
.td { height: 100%; padding: 0 10px; display: flex; align-items: center; border-right: 1px solid #e6e8ee; min-width: 0; }
.td.nb { border-right: 0; }
.ell { white-space: nowrap; letter-spacing: -.06px; }
.more { width: 42px; height: 28px; border-radius: 14px; background: #fff; box-shadow: 1px 2px 3px rgba(0,0,0,.25); display: flex; align-items: center; justify-content: center; gap: 4px; margin: -4px 0 0 -1px; }
.more i { width: 2px; height: 2px; background: #5a6070; }

.overlay { position: absolute; inset: 0; background: rgba(0,0,0,.5); z-index: 3; }
.scroll { position: absolute; z-index: 4; right: 0; top: 38px; width: 8px; height: 917px; border-radius: 4px; background: #a9a9a9; }

.modal { position: absolute; z-index: 5; left: 574px; top: 0; width: 764px; height: 1080px; background: #f6f8fe; box-shadow: 0 16px 24px 2px rgba(0,0,0,.14), 0 6px 30px 5px rgba(0,0,0,.14), 0 0 8px rgba(0,0,0,.15); overflow: visible; }
.mhead { height: 43px; display: flex; justify-content: space-between; padding: 10px 22px 0 19.500px; font-size: 15px; color: #303f56; line-height: 18px; }
.mbody { height: 1037px; background: #fff; border-radius: 14px 14px 0 0; padding: 20px 41.500px 0 33px; box-shadow: 0 -2px 12px rgba(160,180,220,.25); }
.vrow { display: flex; justify-content: flex-end; height: 28px; margin-right: -22px; }
.vm { width: 107px; height: 28px; border: 1px solid #dcdfe6; border-radius: 3px; background: #fff; font: 12px "Liberation Sans", Arial, sans-serif; color: #4f5154; display: flex; align-items: center; justify-content: center; gap: 4px; padding: 0; }
h3 { font-size: 15px; line-height: 20px; height: 20px; margin-top: 13px; color: #55575b; }
.two { display: grid; grid-template-columns: 341px 340.500px; gap: 8px; margin-top: 11px; }
.two.second { margin-top: 31px; }
label { display: block; height: 20px; line-height: 20px; font-size: 12px; color: #606266; }
label em { color: #f56c6c; font-style: normal; margin-right: 0; }
.in { height: 32px; margin-top: 5px; border: 1px solid #dcdcdf; border-radius: 3px; background: #fff; box-shadow: 0 2px 3px rgba(0,0,0,.08); padding: 0 11px 2px 15px; display: flex; align-items: center; justify-content: space-between; font-size: 13px; color: #55575b; }
.in.inset { box-shadow: inset 0 2px 3px rgba(0,0,0,.1); }
.in .chev { margin-top: 5px; stroke: #b4b8c0; }
.fare { margin-top: 31px; }
.info { display: inline-block; width: 13px; height: 13px; border-radius: 50%; background: #55575b; color: #fff; font: italic 700 11px/13px "Liberation Serif", serif; text-align: center; vertical-align: 0; margin-left: 1px; }
.info.up { vertical-align: 1.500px; }
.num { margin-top: 1px; height: 36px; width: 172px; display: flex; align-items: flex-end; }
.cur { width: 42px; height: 36px; background: #f5f7fa; border: 1px solid #d3d7e0; border-radius: 4px 0 0 4px; color: #909399; font-size: 14px; display: flex; align-items: center; justify-content: center; padding-top: 2px; }
.val { width: 98px; height: 32px; border: 1px solid #dcdfe6; border-width: 1px 0; display: flex; align-items: center; justify-content: center; padding-right: 4px; padding-bottom: 1px; box-shadow: inset 0 2px 3px rgba(0,0,0,.1); }
.steps { width: 32px; height: 32px; border: 1px solid #dcdfe6; border-radius: 0 4px 4px 0; background: #f5f7fa; }
.steps div { height: 15px; display: flex; align-items: center; justify-content: center; }
.steps div:first-child { height: 16px; border-bottom: 1px solid #dcdfe6; }
.steps path { fill: none; stroke: #85878c; stroke-width: .9; }
.h-centre { margin-top: 44px; }
.lb { margin-top: 11px; }
.map { position: relative; margin-top: 18px; height: 300px; overflow: hidden; }
.map svg { display: block; }
.lbl { font-family: Roboto, sans-serif; paint-order: stroke; stroke-width: 5px; stroke-linejoin: round; }
.bd { font: 700 27px Roboto, sans-serif; fill: #fff; }
.goog { font: 700 56px "Open Sans", sans-serif; fill: #fff; stroke: #777; stroke-width: 4px; paint-order: stroke; }
.attr { position: absolute; right: 0; bottom: 0; height: 14px; background: rgba(240,243,248,.75); display: flex; font: 10px/14px Roboto, sans-serif; color: #111; padding: 0 6px 0 6px; white-space: nowrap; }
.zoom { position: absolute; right: 11px; top: 195px; width: 40px; height: 81px; background: #fff; border-radius: 2px; box-shadow: 0 1px 4px rgba(0,0,0,.3); display: flex; flex-direction: column; align-items: center; }
.zoom hr { width: 30px; height: 1px; border: 0; background: #e6e6e6; margin: 10px 0 18px; }
.plus { margin-top: 10px; width: 18px; height: 20px; background: linear-gradient(#666,#666) center/18px 4px no-repeat, linear-gradient(#666,#666) center/4px 18px no-repeat; }
.minus { width: 18px; height: 4px; background: #666; }
.h-pay { margin-top: 41px; }
.h-apps { margin-top: 45px; }
.in.tags { justify-content: flex-start; gap: 6px; padding: 0 11px 0 5px; }
.tags .chev { margin-left: auto; margin-top: 2px; }
.tags .spin1 { transform: rotate(205deg); }
.tags .spin2 { transform: rotate(-25deg); }
.tag { height: 20px; border: 1px solid #e6e7ea; background: #f4f4f5; border-radius: 3px; font-size: 12px; color: #85888e; display: flex; align-items: center; justify-content: space-between; padding: 0 1px 0 5.500px; letter-spacing: -.03px; white-space: nowrap; }
.pop { position: absolute; left: 33px; width: 689px; background: #fff; border: 1px solid #e4e7ed; border-radius: 4px; box-shadow: 0 2px 12px rgba(0,0,0,.15); padding: 6px 0; transform-origin: 0 0; }
.p1 { top: 776px; transform: scaleY(.56); opacity: .57; }
.p2 { top: 997px; transform: scaleY(.235); opacity: .18; }
.opt { height: 34px; display: flex; align-items: center; justify-content: space-between; padding: 0 50px 0 20px; font: 700 13px "Liberation Sans", Arial, sans-serif; letter-spacing: -.5px; color: #606266; }
.p2 .opt { padding-right: 20px; }
.opt.on { color: #409eff; letter-spacing: 0; }
.opt.hov { background: #f5f7fa; }
.opt path { fill: none; stroke: #409eff; stroke-width: 1.500; }
</style>
